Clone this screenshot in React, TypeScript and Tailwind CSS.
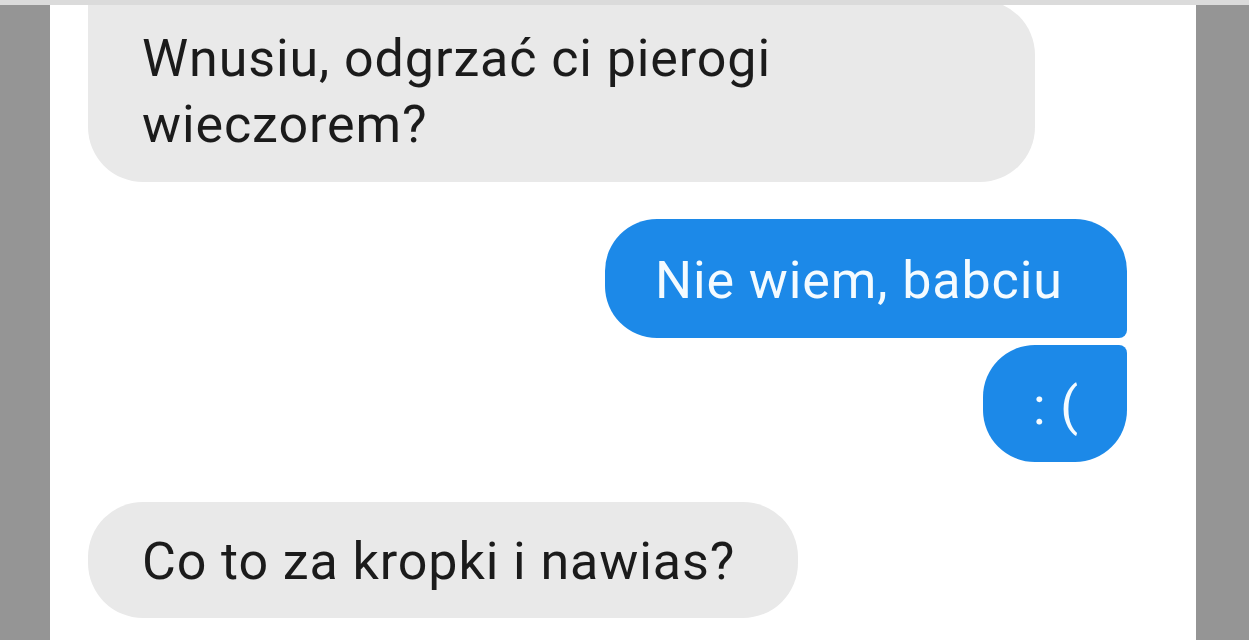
export default function App() {
  return (
    <div className="flex h-[640px] w-full flex-col overflow-hidden bg-white font-['Roboto',sans-serif] text-[52px] leading-[66px] tracking-[0.9px]">
      {/* top strip */}
      <div className="relative z-10 h-[5px] w-full shrink-0 bg-[#dbdbdb]" />

      <div className="flex min-h-0 flex-1">
        <div className="w-[50px] shrink-0 bg-[#959595]" />

        {/* chat column */}
        <div className="flex min-w-0 flex-1 flex-col overflow-hidden">
          <div className="-mt-[5px] ml-[38px] h-[182px] w-[947px] rounded-[55px] rounded-tl-[6px] bg-[#e9e9e9] pl-[54px] pt-[26px] text-[#1b1b1b]">
            Wnusiu, odgrzać ci pierogi
            <br />
            wieczorem?
          </div>

          <div className="mt-[37px] flex flex-col items-end gap-[7px] pr-[69px]">
            <div className="h-[119px] w-[522px] rounded-[52px] rounded-br-[8px] bg-[#1c89e8] pl-[50px] pt-[29px] text-[#f4fbff]">
              Nie wiem, babciu
            </div>
            <div className="h-[117px] w-[144px] rounded-[52px] rounded-tr-[8px] bg-[#1c89e8] pl-[50px] pt-[29px] text-[#f4fbff]">
              : (
            </div>
          </div>

          <div className="ml-[38px] mt-[40px] h-[116px] w-[710px] rounded-[55px] bg-[#e9e9e9] pl-[54px] pt-[27px] text-[#1b1b1b]">
            Co to za kropki i nawias?
          </div>
        </div>

        <div className="w-[53px] shrink-0 bg-[#959595]" />
      </div>
    </div>
  )
}
